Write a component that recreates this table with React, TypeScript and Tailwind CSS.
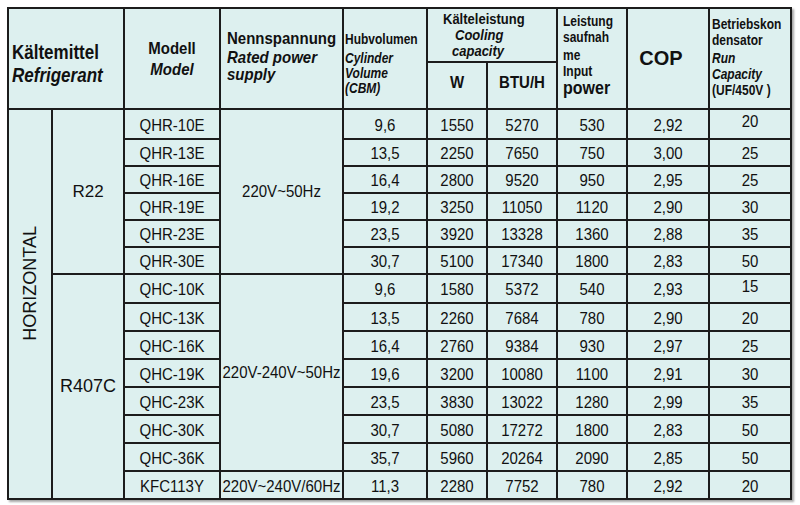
import React from 'react';

interface Row {
  model: string;
  volume: string;
  watt: string;
  btu: string;
  input: string;
  cop: string;
  cap: string;
  capUp?: boolean;
}

const r22: Row[] = [
  { model: 'QHR-10E', volume: '9,6', watt: '1550', btu: '5270', input: '530', cop: '2,92', cap: '20', capUp: true },
  { model: 'QHR-13E', volume: '13,5', watt: '2250', btu: '7650', input: '750', cop: '3,00', cap: '25' },
  { model: 'QHR-16E', volume: '16,4', watt: '2800', btu: '9520', input: '950', cop: '2,95', cap: '25' },
  { model: 'QHR-19E', volume: '19,2', watt: '3250', btu: '11050', input: '1120', cop: '2,90', cap: '30' },
  { model: 'QHR-23E', volume: '23,5', watt: '3920', btu: '13328', input: '1360', cop: '2,88', cap: '35' },
  { model: 'QHR-30E', volume: '30,7', watt: '5100', btu: '17340', input: '1800', cop: '2,83', cap: '50' },
];

const r407c: Row[] = [
  { model: 'QHC-10K', volume: '9,6', watt: '1580', btu: '5372', input: '540', cop: '2,93', cap: '15', capUp: true },
  { model: 'QHC-13K', volume: '13,5', watt: '2260', btu: '7684', input: '780', cop: '2,90', cap: '20' },
  { model: 'QHC-16K', volume: '16,4', watt: '2760', btu: '9384', input: '930', cop: '2,97', cap: '25' },
  { model: 'QHC-19K', volume: '19,6', watt: '3200', btu: '10080', input: '1100', cop: '2,91', cap: '30' },
  { model: 'QHC-23K', volume: '23,5', watt: '3830', btu: '13022', input: '1280', cop: '2,99', cap: '35' },
  { model: 'QHC-30K', volume: '30,7', watt: '5080', btu: '17272', input: '1800', cop: '2,83', cap: '50' },
  { model: 'QHC-36K', volume: '35,7', watt: '5960', btu: '20264', input: '2090', cop: '2,85', cap: '50' },
  { model: 'KFC113Y', volume: '11,3', watt: '2280', btu: '7752', input: '780', cop: '2,92', cap: '20' },
];

const cell = 'border-2 border-[#1c1c1c] p-0';
const num = cell + ' text-center align-middle pt-[2px]';

// the scan is squeezed sideways, so the glyphs look taller than Arial's
function Tall({ children }: { children: React.ReactNode }) {
  return <span className="inline-block scale-y-[1.12]">{children}</span>;
}

function Head({ children }: { children: React.ReactNode }) {
  return <div className="inline-block scale-y-[1.15]">{children}</div>;
}

function DataCells({ row }: { row: Row }) {
  return (
    <>
      <td className={num}><Tall>{row.volume}</Tall></td>
      <td className={num}><Tall>{row.watt}</Tall></td>
      <td className={num}><Tall>{row.btu}</Tall></td>
      <td className={num}><Tall>{row.input}</Tall></td>
      <td className={num}><Tall>{row.cop}</Tall></td>
      <td className={row.capUp ? cell + ' text-center align-middle pb-[5px]' : num}><Tall>{row.cap}</Tall></td>
    </>
  );
}

export default function App() {
  return (
    <div className="w-[800px] h-[505px] bg-white pt-[7px] pl-[7px] font-['Liberation_Sans',Arial,sans-serif] text-[#111]">
      <table className="table-fixed border-collapse w-[785px] bg-[#ddf0ef] shadow-[2px_2px_2px_rgba(0,0,0,0.35)]">
        <colgroup>
          <col className="w-[44px]" />
          <col className="w-[72px]" />
          <col className="w-[96px]" />
          <col className="w-[123px]" />
          <col className="w-[84px]" />
          <col className="w-[60px]" />
          <col className="w-[70px]" />
          <col className="w-[70px]" />
          <col className="w-[82px]" />
          <col className="w-[82px]" />
        </colgroup>
        <thead>
          <tr className="h-[54px]">
            <th colSpan={2} rowSpan={2} className={cell + ' text-left align-middle pl-[3px] pt-[13px] text-[17px] leading-[20px] font-bold'}>
              <Head>
                <div>Kältemittel</div>
                <div className="italic">Refrigerant</div>
              </Head>
            </th>
            <th rowSpan={2} className={cell + ' text-center align-middle text-[15px] leading-[17.5px] font-bold'}>
              <Head>
                <div>Modell</div>
                <div className="italic">Model</div>
              </Head>
            </th>
            <th rowSpan={2} className={cell + ' text-left align-middle pl-[6px] pb-[4px] text-[15px] leading-[15.5px] font-bold'}>
              <Head>
                <div>Nennspannung</div>
                <div className="italic">Rated power</div>
                <div className="italic">supply</div>
              </Head>
            </th>
            <th rowSpan={2} className={cell + ' text-left align-middle pl-[1px] pt-[12px] text-[12px] leading-[13px] font-bold'}>
              <Head>
                <div className="mb-[3px]">Hubvolumen</div>
                <div className="italic">Cylinder</div>
                <div className="italic">Volume</div>
                <div className="italic">(CBM)</div>
              </Head>
            </th>
            <th colSpan={2} className={cell + ' text-left align-top pt-[5px] pl-[15px] text-[13px] leading-[14px] font-bold'}>
              <Head>
                <div>Kälteleistung</div>
                <div className="italic pl-[12px]">Cooling</div>
                <div className="italic pl-[9px]">capacity</div>
              </Head>
            </th>
            <th rowSpan={2} className={cell + ' text-left align-middle pl-[5px] pb-[6px] text-[12px] leading-[14.3px] font-bold'}>
              <Head>
                <div>Leistung</div>
                <div>saufnah</div>
                <div>me</div>
                <div>Input</div>
                <div className="text-[16px] leading-[16px]">power</div>
              </Head>
            </th>
            <th rowSpan={2} className={cell + ' text-center align-middle pr-[14px] pb-[2px] text-[20px] font-bold'}>COP</th>
            <th rowSpan={2} className={cell + ' text-left align-middle pl-[2px] pb-[2px] text-[12px] leading-[14.3px] font-bold'}>
              <Head>
                <div>Betriebskon</div>
                <div>densator</div>
                <div className="italic">Run</div>
                <div className="italic">Capacity</div>
                <div>(UF/450V )</div>
              </Head>
            </th>
          </tr>
          <tr className="h-[47px]">
            <th className={cell + ' text-center align-middle pb-[6px] text-[15px] font-bold'}><Head>W</Head></th>
            <th className={cell + ' text-center align-middle pb-[6px] text-[15px] font-bold'}><Head>BTU/H</Head></th>
          </tr>
        </thead>
        <tbody className="text-[15px]">
          {r22.map((row, i) => (
            <tr key={row.model} className="h-[27px]">
              {i === 0 && (
                <>
                  <td rowSpan={14} className={cell + ' text-center align-middle pb-[34px]'}>
                    <span className="inline-block [writing-mode:vertical-rl] rotate-180 text-[18px]">HORIZONTAL</span>
                  </td>
                  <td rowSpan={6} className={cell + ' text-center align-middle text-[17px]'}>R22</td>
                </>
              )}
              <td className={num}><Tall>{row.model}</Tall></td>
              {i === 0 && (
                <td rowSpan={6} className={cell + ' text-center align-middle whitespace-nowrap'}><Tall>220V~50Hz</Tall></td>
              )}
              <DataCells row={row} />
            </tr>
          ))}
          {r407c.map((row, i) => (
            <tr key={row.model} className="h-[28px]">
              {i === 0 && (
                <td rowSpan={8} className={cell + ' text-center align-middle text-[18px]'}>R407C</td>
              )}
              <td className={num}><Tall>{row.model}</Tall></td>
              {i === 0 && (
                <td rowSpan={7} className={cell + ' text-center align-middle whitespace-nowrap'}><Tall>220V-240V~50Hz</Tall></td>
              )}
              {i === 7 && (
                <td className={cell + ' text-center align-middle whitespace-nowrap pt-[2px]'}><Tall>220V~240V/60Hz</Tall></td>
              )}
              <DataCells row={row} />
            </tr>
          ))}
        </tbody>
      </table>
    </div>
  );
}
